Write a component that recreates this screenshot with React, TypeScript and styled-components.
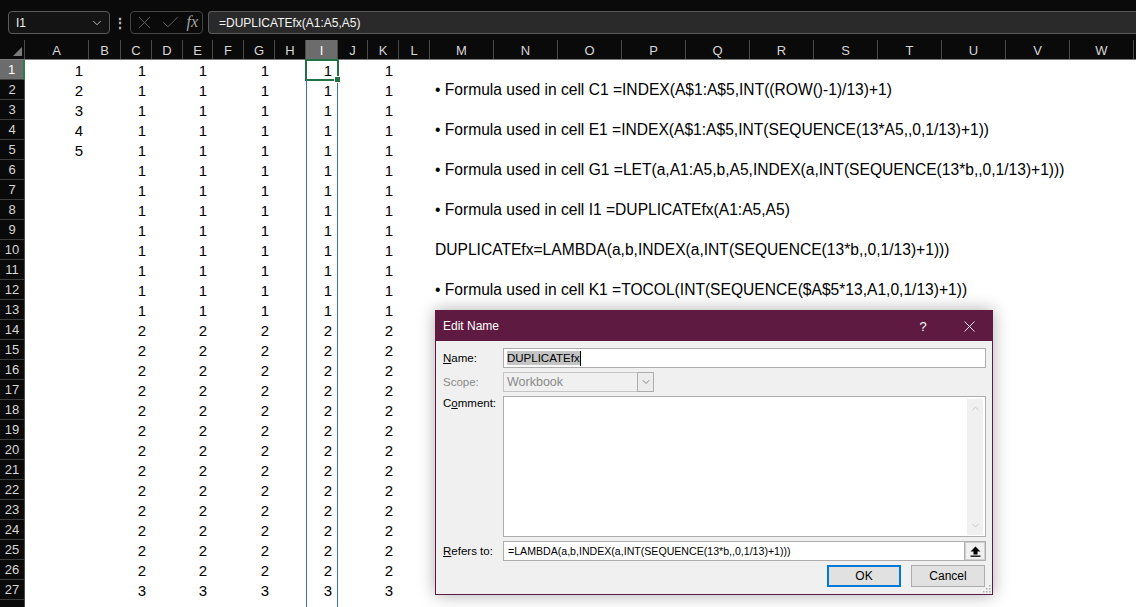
import React from 'react'
import styled, { createGlobalStyle } from 'styled-components'
import { Check, ChevronDown, ChevronUp, X } from 'lucide-react'

const UI_FONT = `'Liberation Sans', Arial, sans-serif`
const CELL_FONT = `'Liberation Sans', Arial, sans-serif`

const GlobalStyle = createGlobalStyle`
  html, body {
    margin: 0;
    padding: 0;
    background: #0a0a0a;
  }
  body {
    overflow: hidden;
  }
`

const Screen = styled.div`
  position: relative;
  width: 1136px;
  height: 607px;
  overflow: hidden;
  background: #0a0a0a;
  display: flex;
  flex-direction: column;
  font-family: ${UI_FONT};
`

/* ---------- formula bar ---------- */

const FormulaBar = styled.div`
  height: 40px;
  flex: none;
  display: flex;
  align-items: flex-start;
  padding: 11px 0 0 8px;
  box-sizing: border-box;
`

const NameBox = styled.div`
  width: 102px;
  height: 23px;
  box-sizing: border-box;
  border: 1px solid #5a5a5a;
  border-radius: 4px;
  background: #141414;
  display: flex;
  align-items: center;
  justify-content: space-between;
  padding: 0 5px 0 7px;
  color: #f2f2f2;
  font-size: 12px;
`

const Dots = styled.div`
  width: 20px;
  height: 23px;
  display: flex;
  align-items: center;
  justify-content: center;
  color: #bdbdbd;
  font-size: 14px;
  font-weight: bold;
`

const FxBox = styled.div`
  width: 73px;
  height: 23px;
  box-sizing: border-box;
  border: 1px solid #444;
  border-radius: 4px;
  display: flex;
  align-items: center;
  justify-content: space-between;
  padding: 0 4px 0 3px;
  margin-right: 5px;
`

const FxMark = styled.span`
  font-family: 'Liberation Serif', 'Times New Roman', serif;
  font-style: italic;
  font-size: 16px;
  color: #a6a6a6;
  margin-top: -2px;
`

const FormulaInput = styled.div`
  flex: 1;
  height: 23px;
  box-sizing: border-box;
  border: 1px solid #5a5a5a;
  border-right: none;
  border-radius: 4px 0 0 4px;
  background: #2a2a2a;
  color: #f5f5f5;
  font-size: 12px;
  display: flex;
  align-items: center;
  padding-left: 10px;
`

/* ---------- grid ---------- */

const HeaderRow = styled.div`
  height: 20px;
  flex: none;
  display: flex;
  box-sizing: border-box;
  border-bottom: 1px solid #7c7c7c;
`

const Corner = styled.div`
  width: 25px;
  flex: none;
  position: relative;
  box-sizing: border-box;
  border-right: 1px solid #4a4a4a;
  svg {
    position: absolute;
    right: 2px;
    bottom: 3px;
  }
`

const ColHeader = styled.div<{ $w: number; $sel?: boolean }>`
  width: ${p => p.$w}px;
  flex: none;
  box-sizing: border-box;
  border-right: 1px solid #4a4a4a;
  background: ${p => (p.$sel ? '#6c6c6c' : '#0a0a0a')};
  color: ${p => (p.$sel ? '#ffffff' : '#d6d6d6')};
  font-size: 13px;
  display: flex;
  align-items: center;
  justify-content: center;
  padding-top: 1px;
`

const Row = styled.div<{ $h?: number }>`
  height: ${p => p.$h ?? 20}px;
  flex: none;
  display: flex;
  background: #ffffff;
`

const RowHeader = styled.div<{ $sel?: boolean }>`
  width: 25px;
  flex: none;
  box-sizing: border-box;
  background: ${p => (p.$sel ? '#6c6c6c' : '#0a0a0a')};
  border-bottom: 1px solid #3d3d3d;
  border-right: ${p => (p.$sel ? '2px solid #2f7d4f' : '1px solid #4a4a4a')};
  color: ${p => (p.$sel ? '#ffffff' : '#d6d6d6')};
  font-size: 13px;
  display: flex;
  align-items: center;
  justify-content: center;
`

const Cell = styled.div<{ $w: number; $spill?: boolean; $active?: boolean; $note?: boolean }>`
  width: ${p => p.$w}px;
  flex: none;
  position: relative;
  box-sizing: border-box;
  display: flex;
  align-items: center;
  justify-content: ${p => (p.$note ? 'flex-start' : 'flex-end')};
  padding: ${p => (p.$note ? '0 0 0 5px' : '0 6px 0 0')};
  font-family: ${CELL_FONT};
  font-size: ${p => (p.$note ? '15.6px' : '15px')};
  color: #000;
  white-space: nowrap;
  box-shadow: ${p => (p.$spill ? 'inset 1px 0 #3a6fc8, inset -1px 0 #3a6fc8' : 'none')};
  ${p =>
    p.$active &&
    `
    &::after {
      content: '';
      position: absolute;
      left: -1px;
      top: -1px;
      right: -1px;
      bottom: -1px;
      border: 2px solid #217346;
    }
    &::before {
      content: '';
      position: absolute;
      right: -3px;
      bottom: -3px;
      width: 5px;
      height: 5px;
      background: #217346;
      border: 1px solid #fff;
      z-index: 2;
    }
  `}
`

/* ---------- dialog ---------- */

const Dialog = styled.div`
  position: absolute;
  left: 435px;
  top: 310px;
  width: 558px;
  height: 285px;
  box-sizing: border-box;
  border: 1px solid #5e1a40;
  background: #f0f0f0;
  box-shadow: 0 0 16px rgba(0, 0, 0, 0.32);
  display: flex;
  flex-direction: column;
  font-family: ${UI_FONT};
  font-size: 12px;
  color: #000;
`

const TitleBar = styled.div`
  height: 30px;
  flex: none;
  background: #5e1a40;
  color: #fff;
  display: flex;
  align-items: center;
  padding-left: 7px;
`

const TitleText = styled.div`
  flex: 1;
  font-size: 12px;
`

const CaptionButton = styled.div`
  width: 46px;
  height: 30px;
  display: flex;
  align-items: center;
  justify-content: center;
  color: #fff;
  font-size: 13px;
`

const Body = styled.div`
  flex: 1;
  display: grid;
  grid-template-columns: 60px 1fr;
  grid-template-rows: 20px 20px 141px 20px 22px;
  row-gap: 4px;
  padding: 7px 6px 0 7px;
  position: relative;
`

const Label = styled.div<{ $disabled?: boolean; $top?: boolean }>`
  display: flex;
  align-items: ${p => (p.$top ? 'flex-start' : 'center')};
  padding-top: ${p => (p.$top ? '1px' : '0')};
  font-size: 11.5px;
  color: ${p => (p.$disabled ? '#8a8a8a' : '#000')};
`

const TextBox = styled.div`
  box-sizing: border-box;
  border: 1px solid #adadad;
  background: #fff;
  display: flex;
  align-items: center;
  padding-left: 3px;
  font-size: 11.5px;
`

const Selected = styled.span`
  background: #c4c4c4;
  padding: 1px 0;
`

const Caret = styled.span`
  display: inline-block;
  width: 1px;
  height: 15px;
  background: #000;
`

const ScopeSelect = styled.div`
  width: 151px;
  box-sizing: border-box;
  border: 1px solid #c4c4c4;
  background: #f0f0f0;
  display: flex;
  align-items: stretch;
  color: #8a8a8a;
  font-size: 12.5px;
`

const ScopeText = styled.div`
  flex: 1;
  display: flex;
  align-items: center;
  padding-left: 3px;
`

const ScopeButton = styled.div`
  width: 17px;
  box-sizing: border-box;
  border: 1px solid #adadad;
  margin: -1px -1px -1px 0;
  background: #ececec;
  display: flex;
  align-items: center;
  justify-content: center;
  color: #5a5a5a;
`

const CommentArea = styled.div`
  box-sizing: border-box;
  border: 1px solid #adadad;
  background: #fff;
  display: flex;
  justify-content: flex-end;
  padding: 2px 2px 1px 0;
`

const ScrollTrack = styled.div`
  width: 16px;
  background: #f0f0f0;
  display: flex;
  flex-direction: column;
  justify-content: space-between;
  align-items: center;
  padding: 4px 0;
  color: #c2c2c2;
`

const RefersRow = styled.div`
  display: flex;
`

const RefersInput = styled.div`
  flex: 1;
  box-sizing: border-box;
  border: 1px solid #adadad;
  border-right: none;
  background: #fff;
  display: flex;
  align-items: center;
  padding-left: 4px;
  font-size: 10.6px;
  white-space: nowrap;
  overflow: hidden;
`

const CollapseButton = styled.div`
  width: 22px;
  box-sizing: border-box;
  border: 2px solid #cfcfcf;
  outline: 1px solid #adadad;
  outline-offset: -1px;
  background: #f0f0f0;
  display: flex;
  align-items: center;
  justify-content: center;
`

const ButtonRow = styled.div`
  grid-column: 1 / 3;
  display: flex;
  justify-content: flex-end;
  gap: 10px;
  padding-right: 1px;
`

const DialogButton = styled.div<{ $primary?: boolean }>`
  width: 74px;
  box-sizing: border-box;
  border: ${p => (p.$primary ? '2px solid #0078d7' : '1px solid #adadad')};
  background: #e1e1e1;
  display: flex;
  align-items: center;
  justify-content: center;
  font-size: 12px;
`

const Grip = styled.svg`
  position: absolute;
  right: 1px;
  bottom: 1px;
`

/* ---------- data ---------- */

type Col = { key: string; w: number }

const COLS: Col[] = [
  { key: 'A', w: 64 },
  { key: 'B', w: 32 },
  { key: 'C', w: 31 },
  { key: 'D', w: 31 },
  { key: 'E', w: 30 },
  { key: 'F', w: 31 },
  { key: 'G', w: 31 },
  { key: 'H', w: 31 },
  { key: 'I', w: 32 },
  { key: 'J', w: 30 },
  { key: 'K', w: 31 },
  { key: 'L', w: 31 },
  ...'MNOPQRSTUVW'.split('').map(key => ({ key, w: 64 }))
]

const NOTES: Record<number, string> = {
  2: '• Formula used in cell C1 =INDEX(A$1:A$5,INT((ROW()-1)/13)+1)',
  4: '• Formula used in cell E1 =INDEX(A$1:A$5,INT(SEQUENCE(13*A5,,0,1/13)+1))',
  6: '• Formula used in cell G1 =LET(a,A1:A5,b,A5,INDEX(a,INT(SEQUENCE(13*b,,0,1/13)+1)))',
  8: '• Formula used in cell I1 =DUPLICATEfx(A1:A5,A5)',
  10: 'DUPLICATEfx=LAMBDA(a,b,INDEX(a,INT(SEQUENCE(13*b,,0,1/13)+1)))',
  12: '• Formula used in cell K1 =TOCOL(INT(SEQUENCE($A$5*13,A1,0,1/13)+1))'
}

const REPEATED = ['C', 'E', 'G', 'I', 'K']
const ROWS = Array.from({ length: 27 }, (_, i) => i + 1)

const cellValue = (col: string, r: number): string => {
  if (col === 'A') return r <= 5 ? String(r) : ''
  if (REPEATED.includes(col)) return r <= 13 ? '1' : r <= 26 ? '2' : '3'
  if (col === 'M') return NOTES[r] || ''
  return ''
}

const App: React.FC = () => {
  return (
    <Screen>
      <GlobalStyle />
      <FormulaBar>
        <NameBox>
          <span>I1</span>
          <ChevronDown size={14} color='#d0d0d0' strokeWidth={1.5} />
        </NameBox>
        <Dots>⋮</Dots>
        <FxBox>
          <X size={21} color='#6a6a6a' strokeWidth={1} />
          <Check size={21} color='#6a6a6a' strokeWidth={1} />
          <FxMark>fx</FxMark>
        </FxBox>
        <FormulaInput>=DUPLICATEfx(A1:A5,A5)</FormulaInput>
      </FormulaBar>

      <HeaderRow>
        <Corner>
          <svg width='9' height='9' viewBox='0 0 9 9'>
            <polygon points='9,0 9,9 0,9' fill='#7a7a7a' />
          </svg>
        </Corner>
        {COLS.map(c => (
          <ColHeader key={c.key} $w={c.w} $sel={c.key === 'I'}>
            {c.key}
          </ColHeader>
        ))}
      </HeaderRow>

      {ROWS.map(r => (
        <Row key={r}>
          <RowHeader $sel={r === 1}>{r}</RowHeader>
          {COLS.map(c => (
            <Cell
              key={c.key}
              $w={c.w}
              $spill={c.key === 'I'}
              $active={c.key === 'I' && r === 1}
              $note={c.key === 'M'}
            >
              {cellValue(c.key, r)}
            </Cell>
          ))}
        </Row>
      ))}
      <Row $h={20}>
        <RowHeader />
        {COLS.map(c => (
          <Cell key={c.key} $w={c.w} $spill={c.key === 'I'} />
        ))}
      </Row>

      <Dialog>
        <TitleBar>
          <TitleText>Edit Name</TitleText>
          <CaptionButton>?</CaptionButton>
          <CaptionButton>
            <X size={19} color='#ffffff' strokeWidth={1.1} />
          </CaptionButton>
        </TitleBar>
        <Body>
          <Label>
            <span>
              <u>N</u>ame:
            </span>
          </Label>
          <TextBox>
            <Selected>DUPLICATEfx</Selected>
            <Caret />
          </TextBox>

          <Label $disabled>Scope:</Label>
          <ScopeSelect>
            <ScopeText>Workbook</ScopeText>
            <ScopeButton>
              <ChevronDown size={12} strokeWidth={1.4} />
            </ScopeButton>
          </ScopeSelect>

          <Label $top>
            <span>
              C<u>o</u>mment:
            </span>
          </Label>
          <CommentArea>
            <ScrollTrack>
              <ChevronUp size={11} strokeWidth={2} />
              <ChevronDown size={11} strokeWidth={2} />
            </ScrollTrack>
          </CommentArea>

          <Label>
            <span>
              <u>R</u>efers to:
            </span>
          </Label>
          <RefersRow>
            <RefersInput>=LAMBDA(a,b,INDEX(a,INT(SEQUENCE(13*b,,0,1/13)+1)))</RefersInput>
            <CollapseButton>
              <svg width='11' height='11' viewBox='0 0 11 11'>
                <polygon points='5.5,0.5 10.5,5.5 7.5,5.5 7.5,8.5 3.5,8.5 3.5,5.5 0.5,5.5' fill='#000' />
                <rect x='0.5' y='9.5' width='10' height='1.3' fill='#000' />
              </svg>
            </CollapseButton>
          </RefersRow>

          <ButtonRow>
            <DialogButton $primary>OK</DialogButton>
            <DialogButton>Cancel</DialogButton>
          </ButtonRow>
          <Grip width='10' height='10' viewBox='0 0 10 10'>
            <rect x='8' y='2' width='1.5' height='1.5' fill='#b0b0b0' />
            <rect x='5' y='5' width='1.5' height='1.5' fill='#b0b0b0' />
            <rect x='8' y='5' width='1.5' height='1.5' fill='#b0b0b0' />
            <rect x='2' y='8' width='1.5' height='1.5' fill='#b0b0b0' />
            <rect x='5' y='8' width='1.5' height='1.5' fill='#b0b0b0' />
            <rect x='8' y='8' width='1.5' height='1.5' fill='#b0b0b0' />
          </Grip>
        </Body>
      </Dialog>
    </Screen>
  )
}

export default App
